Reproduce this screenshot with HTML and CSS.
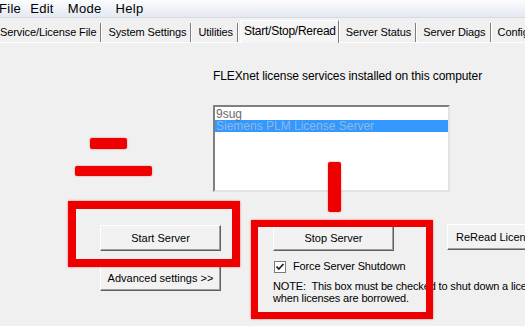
FILE: index.html
```html
<!DOCTYPE html>
<html lang="en">
<head>
    <meta charset="UTF-8">
    <title>LMTOOLS</title>
    <link rel="stylesheet" href="styles.css">
</head>
<body>
    <div class="menubar">
        <span class="menu-item">File</span>
        <span class="menu-item">Edit</span>
        <span class="menu-item">Mode</span>
        <span class="menu-item">Help</span>
    </div>

    <div class="tabs">
        <span class="tab tab-first">Service/License File</span>
        <span class="tab">System Settings</span>
        <span class="tab">Utilities</span>
        <span class="tab tab-active">Start/Stop/Reread</span>
        <span class="tab">Server Status</span>
        <span class="tab">Server Diags</span>
        <span class="tab">Config Services</span>
    </div>

    <div class="panel">
        <div class="services">
            <div class="services-label">FLEXnet license services installed on this computer</div>
            <div class="listbox">
                <div class="list-item">9sug</div>
                <div class="list-item list-item-selected">Siemens PLM License Server</div>
            </div>
        </div>

        <div class="actions">
            <div class="action-col col-start">
                <button class="btn">Start Server</button>
                <button class="btn btn-advanced">Advanced settings &gt;&gt;</button>
            </div>
            <div class="action-col col-stop">
                <button class="btn">Stop Server</button>
                <label class="check-row">
                    <svg class="checkbox" width="12" height="12" viewBox="0 0 12 12">
                        <rect x="0.5" y="0.5" width="11" height="11" fill="#fff" stroke="#7a7a7a"/>
                        <path d="M2.5 5.5 L4.8 8 L9.5 3" fill="none" stroke="#222" stroke-width="1.8"/>
                    </svg>
                    Force Server Shutdown
                </label>
                <p class="note">NOTE:&nbsp; This box must be checked to shut down a license server<br>when licenses are borrowed.</p>
            </div>
            <div class="action-col col-reread">
                <button class="btn btn-reread">ReRead License File</button>
            </div>
        </div>
    </div>

    <!-- red annotation marks drawn over the screenshot -->
    <div class="mark mark-dash-short"></div>
    <div class="mark mark-dash-long"></div>
    <div class="mark mark-bar"></div>
    <div class="mark-box box-start"></div>
    <div class="mark-box box-stop"></div>
</body>
</html>
```

FILE: styles.css
```css
:root {
    --face: #f0f0f0;
    --shadow: #a0a0a0;
    --dark: #696969;
    --mark: #ee0000;
}

body {
    margin: 0;
    width: 525px;
    height: 326px;
    overflow: hidden;
    position: relative;
    background: var(--face);
    font-family: 'Liberation Sans', Arial, sans-serif;
    font-size: 11px;
    color: #000;
}

.menubar {
    height: 17px;
    display: flex;
    align-items: center;
    gap: 14px;
    margin-left: -1px;
    background: linear-gradient(#fbfcfe, #e4e9f1);
    border-bottom: 1px solid #d5dae3;
    font-size: 13px;
    letter-spacing: 0.3px;
}

.menu-item:first-child {
    margin-right: -5px;
}

.tabs {
    height: 24px;
    display: flex;
    align-items: flex-end;
    margin-left: -7px;
    border-bottom: 1px solid #fff;
    white-space: nowrap;
}

.tab {
    height: 19px;
    line-height: 18px;
    padding: 0 4px 0 7px;
    border-right: 1px solid #7d7d7d;
    box-shadow: 1px 0 0 #fff;
    font-size: 11px;
    letter-spacing: -0.1px;
}

.tab-active {
    height: 22px;
    line-height: 20px;
    padding: 0 2px 0 3px;
    margin-left: 2px;
    border-left: 1px solid #fff;
    border-top: 1px solid #fff;
    background: #f5f5f5;
    margin-bottom: -1px;
    font-size: 12px;
    letter-spacing: -0.25px;
}

.panel {
    padding-top: 27px;
}

.services {
    margin-left: 213px;
    width: 237px;
}

.services-label {
    line-height: 13px;
    font-size: 12px;
    letter-spacing: -0.1px;
    white-space: nowrap;
}

.listbox {
    margin-top: 22px;
    height: 82px;
    background: #fff;
    border: 2px solid;
    border-color: #7f7f7f #e3e3e3 #e3e3e3 #7f7f7f;
    padding-top: 1px;
}

.list-item {
    height: 12px;
    line-height: 12px;
    padding-left: 1px;
    color: #6a6a6a;
    font-size: 12px;
}

.list-item-selected {
    background: #3399ff;
    color: #90b8e6;
}

.actions {
    display: flex;
    gap: 52px;
    margin-top: 33px;
    margin-left: 100px;
}

.action-col {
    display: flex;
    flex-direction: column;
    align-items: flex-start;
}

.col-start,
.col-stop {
    width: 122px;
}

.btn {
    height: 26px;
    width: 121px;
    padding: 0;
    font-family: inherit;
    font-size: 11px;
    color: #000;
    background: #f2f2f2;
    border: 1px solid;
    border-color: #fff #606060 #606060 #fff;
    box-shadow: inset -1px -1px 0 var(--shadow);
}

.btn-advanced {
    margin-top: 14px;
}

.btn-reread {
    width: 110px;
    text-align: left;
    padding-left: 8px;
    white-space: nowrap;
    margin-top: -1px;
}

.check-row {
    display: flex;
    align-items: center;
    gap: 7px;
    margin-top: 9px;
    margin-left: 1px;
    line-height: 13px;
    letter-spacing: -0.15px;
    white-space: nowrap;
}

.checkbox {
    flex: none;
}

.note {
    margin: 7px 0 0;
    line-height: 12px;
    letter-spacing: -0.15px;
    white-space: nowrap;
}

.mark {
    position: absolute;
    background: var(--mark);
    border-radius: 2px;
    box-shadow: 0 0 2px rgba(238, 0, 0, 0.5);
}

.mark-dash-short {
    left: 90px;
    top: 138px;
    width: 37px;
    height: 11px;
}

.mark-dash-long {
    left: 75px;
    top: 166px;
    width: 77px;
    height: 10px;
}

.mark-bar {
    left: 328px;
    top: 162px;
    width: 13px;
    height: 50px;
}

.mark-box {
    position: absolute;
    border: 8px solid var(--mark);
    box-sizing: border-box;
    box-shadow: 0 0 2px rgba(238, 0, 0, 0.5);
}

.box-start {
    left: 68px;
    top: 201px;
    width: 172px;
    height: 66px;
}

.box-stop {
    left: 251px;
    top: 220px;
    width: 182px;
    height: 99px;
    border-width: 7px;
}
```
